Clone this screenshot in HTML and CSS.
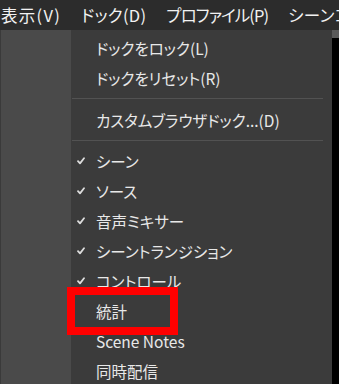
FILE: index.html
```html
<!DOCTYPE html>
<html lang="ja">
<head>
    <meta charset="UTF-8">
    <meta name="viewport" content="width=device-width, initial-scale=1.0">
    <title>ドックメニュー</title>
    <link rel="stylesheet" href="styles.css">
</head>
<body>
<div class="menubar">
    <span class="menubar-item first">表示(V)</span>
    <span class="menubar-item">ドック(D)</span>
    <span class="menubar-item tight">プロファイル(P)</span>
    <span class="menubar-item">シーンコレクション(S)</span>
</div>
<div class="workspace">
    <div class="side-panel"></div>
    <div class="dock-menu">
        <div class="menu-item">ドックをロック(L)</div>
        <div class="menu-item">ドックをリセット(R)</div>
        <div class="separator"></div>
        <div class="menu-item">カスタムブラウザドック...(D)</div>
        <div class="separator short"></div>
        <div class="menu-item checked">シーン</div>
        <div class="menu-item checked">ソース</div>
        <div class="menu-item checked">音声ミキサー</div>
        <div class="menu-item checked">シーントランジション</div>
        <div class="menu-item checked">コントロール</div>
        <div class="menu-item highlighted">統計</div>
        <div class="menu-item">Scene Notes</div>
        <div class="menu-item">同時配信</div>
    </div>
    <div class="preview">
        <div class="scroll-nub"></div>
    </div>
</div>

<svg width="0" height="0" style="position:absolute">
    <symbol id="check" viewBox="0 0 8 8">
        <polyline points="1,4.2 3,6.4 7,1.2" fill="none" stroke="#dcdcdc" stroke-width="1.8" stroke-linecap="round" stroke-linejoin="round"/>
    </symbol>
</svg>

<script>
    document.querySelectorAll('.menu-item.checked').forEach(item => {
        item.insertAdjacentHTML('afterbegin', '<svg class="check-icon"><use href="#check"/></svg>');
    });
</script>
</body>
</html>
```

FILE: styles.css
```css
body {
    margin: 0;
    width: 339px;
    height: 384px;
    overflow: hidden;
    background-color: #000;
    font-family: 'Noto Sans CJK JP', 'Noto Sans', sans-serif;
    font-feature-settings: "palt";
    color: #e8e8e8;
}

.menubar {
    height: 30px;
    background-color: #2c2c2c;
    display: flex;
    align-items: center;
    white-space: nowrap;
    overflow: hidden;
    font-size: 16.5px;
    color: #f2f2f2;
}

.menubar-item {
    padding: 0 10px;
    letter-spacing: 0.3px;
}

.menubar-item.first {
    padding-left: 1px;
    letter-spacing: 1.3px;
}

.menubar-item.tight {
    letter-spacing: -0.9px;
}

.workspace {
    display: flex;
    height: 354px;
}

.side-panel {
    width: 70px;
    background-color: #4a4a4a;
    border-left: 1px solid #3a3a3a;
}

.dock-menu {
    width: 261px;
    background-color: #3b3b3b;
    padding-top: 3px;
}

.menu-item {
    position: relative;
    height: 30px;
    line-height: 30px;
    padding-left: 25px;
    font-size: 15.5px;
    white-space: nowrap;
}

.check-icon {
    position: absolute;
    left: 6px;
    top: 11px;
    width: 8px;
    height: 8px;
}

.highlighted::after {
    content: "";
    position: absolute;
    left: -4px;
    top: -9px;
    width: 95px;
    height: 32px;
    border: 8px solid #ff0000;
}

.separator {
    height: 12px;
    position: relative;
}

.separator.short {
    height: 11px;
}

.separator::before {
    content: "";
    position: absolute;
    left: 1px;
    right: 9px;
    top: 5px;
    border-top: 1px solid #525252;
}

.preview {
    flex: 1;
    background-color: #000;
}

.scroll-nub {
    height: 8px;
    background-color: #5a5a5a;
}
```
